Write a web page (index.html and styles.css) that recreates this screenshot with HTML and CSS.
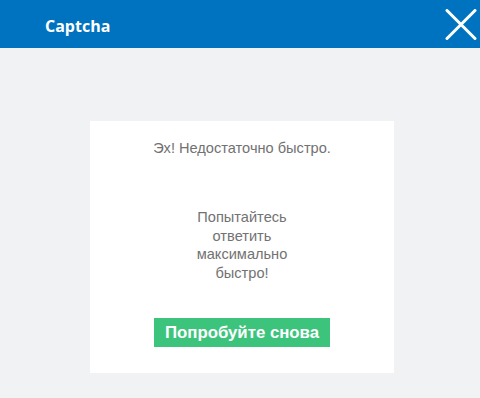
FILE: index.html
```html
<!DOCTYPE html>
<html lang="ru">
<head>
<meta charset="utf-8">
<title>Captcha</title>
<link rel="stylesheet" href="styles.css">
</head>
<body>
<div class="dialog">
  <header class="titlebar">
    <span class="title">Captcha</span>
    <button class="close" aria-label="Закрыть">
      <svg width="32" height="31" viewBox="0 0 32 31"><path d="M2 1.5 L30 29.5 M30 1.5 L2 29.5" stroke="#fff" stroke-width="3" stroke-linecap="round" fill="none"/></svg>
    </button>
  </header>
  <main class="content">
    <section class="card">
      <p class="lead">Эх! Недостаточно быстро.</p>
      <p class="hint">Попытайтесь ответить максимально быстро!</p>
      <button class="retry">Попробуйте снова</button>
    </section>
  </main>
</div>
</body>
</html>
```
FILE: styles.css
```css
* { box-sizing: border-box; }
html, body { margin: 0; padding: 0; }
body {
  width: 480px;
  height: 398px;
  background: #f1f2f4;
  font-family: "Liberation Sans", Arial, sans-serif;
  overflow: hidden;
}
.dialog { display: flex; flex-direction: column; height: 398px; }
.titlebar {
  height: 48px;
  background: #0073c0;
  display: flex;
  align-items: flex-start;
  justify-content: space-between;
  padding: 0 3px 0 45px;
}
.title {
  font-family: "Open Sans", sans-serif;
  font-weight: 700;
  font-size: 16px;
  line-height: 22px;
  color: #fff;
  padding-top: 15px;
}
.close {
  border: 0;
  background: transparent;
  padding: 0;
  margin-top: 9px;
  width: 32px;
  height: 31px;
  display: block;
}
.close svg { display: block; }
.content {
  flex: 1;
  display: flex;
  justify-content: center;
  padding-top: 73px;
  padding-left: 4px;
}
.card {
  width: 304px;
  height: 252px;
  background: #fff;
  display: flex;
  flex-direction: column;
  align-items: center;
  padding-top: 18px;
  color: #727272;
  font-size: 14.6px;
}
.lead { margin: 0; line-height: 19px; }
.hint {
  margin: 50px 0 0;
  width: 104px;
  text-align: center;
  line-height: 18.7px;
}
.retry {
  margin-top: 35px;
  height: 29px;
  padding: 1px 8px 0;
  border: 0;
  background: #3cc47c;
  color: #fff;
  font-family: "Liberation Sans", Arial, sans-serif;
  font-weight: 700;
  font-size: 16.8px;
  line-height: 28px;
  width: 176px;
}
```
